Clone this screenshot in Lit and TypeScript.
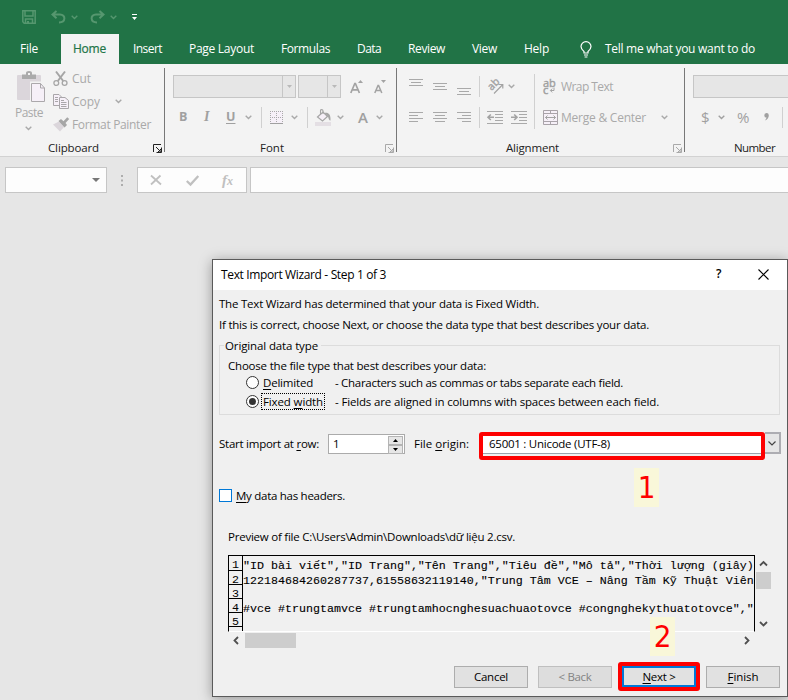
import { LitElement, html, svg, css, nothing } from "lit";
import { customElement, property } from "lit/decorators.js";

/* A single-line label whose tracking is adjusted so that it fills a given width. */
@customElement("ui-label")
class UiLabel extends LitElement {
  @property({ type: Number }) w = 0;
  static styles = css`
    :host { display: inline-block; white-space: nowrap; flex: none; width: max-content; justify-self: start; }
  `;
  firstUpdated() {
    if (!this.w) return;
    const n = (this.textContent ?? "").trim().length;
    const natural = this.getBoundingClientRect().width;
    this.style.letterSpacing = `${(this.w - natural) / n}px`;
  }
  render() { return html`<slot></slot>`; }
}

const icon = (w: number, h: number, body: unknown, cls = "") =>
  html`<svg class="ic ${cls}" width=${w} height=${h} viewBox="0 0 ${w} ${h}">${body}</svg>`;

const chevron = (cls = "") => icon(7, 5, svg`<path d="M.7 .8 3.5 3.5 6.3 .8" fill="none" stroke="currentColor" stroke-width="1.4"/>`, cls);
const triangle = () => icon(5, 3, svg`<path d="M0 0H5L2.5 3Z" fill="#b9b9b9"/>`);
const launcher = () => icon(9, 9, svg`<path d="M.5 8V.5H8M3 3 7 7M8.5 3.5V8.5H3.5M8 5V8H5Z" fill="none" stroke="currentColor"/>`, "launch");
const lines = (rows: number[][]) => icon(14, 19, rows.map(([x, y, w]) => svg`<rect x=${x} y=${y} width=${w} height="1" fill="#a9a9a9"/>`));

const saveIcon = icon(14, 14, svg`<path d="M.8 .8H13.2V13.2H2.2L.8 11.8ZM3 1V6H11V1M3.5 13V9H10.5V13" fill="none" stroke="#56976f" stroke-width="1.5"/><rect x="5" y="11" width="2" height="3" fill="#56976f"/>`);
const undoIcon = icon(15, 14, svg`<path d="M5.5 1 1.5 4.5 5.5 8.2M1.8 4.5H9C15 4.5 15 12.4 8 12.4" fill="none" stroke="#56976f" stroke-width="2"/>`);
const redoIcon = icon(15, 14, svg`<path d="M9.5 1 13.5 4.5 9.5 8.2M13.2 4.5H6C0 4.5 0 12.4 7 12.4" fill="none" stroke="#56976f" stroke-width="2"/>`);
const customize = icon(5, 6, svg`<path d="M0 0H5V1H0ZM0 3H5L2.5 6Z" fill="#fff"/>`);
const bulb = icon(12, 17, svg`<path d="M4 12V10.4C2.4 9.2 1 7.8 1 5.6A5 5 0 0 1 11 5.6C11 7.8 9.6 9.2 8 10.4V12ZM4 14H8M4.6 16H7.4" fill="none" stroke="#fff" stroke-width="1.2"/>`);

const pasteIcon = icon(29, 32, svg`
  <rect x="0" y="4" width="24" height="25" rx="1" fill="#dbd6db"/>
  <path d="M5 3.5H9V2Q9 0 12 0T15 2V3.5H19V8H5Z" fill="#ababab"/><rect x="11" y="2" width="2" height="2" fill="#f3f3f3"/>
  <path d="M13 10.5H24L29 16V32H13Z" fill="#f3f3f3"/>
  <path d="M14.5 12.5H23.5L27.5 17V30.5H14.5Z" fill="#f6f0f8" stroke="#aba8ab"/><path d="M23.5 12.5V17H27.5" fill="none" stroke="#aba8ab"/>`);
const cutIcon = icon(15, 16, svg`<path d="M3 .5 10.2 10M12 .5 4.8 10" stroke="#a6a6a6" stroke-width="2" fill="none"/><circle cx="3.3" cy="12" r="2.4" fill="none" stroke="#a6a6a6" stroke-width="1.3"/><circle cx="11.6" cy="12" r="2.4" fill="none" stroke="#a6a6a6" stroke-width="1.3"/>`);
const copyIcon = icon(16, 15, svg`<path d="M.5 .5H6L8.5 3V11.5H.5ZM2 3.5H5M2 5.5H5M2 7.5H5" fill="#f6f0f8" stroke="#a9a6a9"/><path d="M6.5 3.5H12L15.5 6.5V14.5H6.5Z" fill="#f6f0f8" stroke="#a9a6a9"/><path d="M8 6.5H11M8 8.5H13.5M8 10.5H13.5M8 12.5H13.5" stroke="#a9a6a9"/>`);
const brushIcon = icon(17, 15, svg`<path d="M0 7.5 6 4.5 11 10 7 14.5Z" fill="#dbd6db"/><path d="M5.5 4 8 2 10.5 4.3 14.2 .2 16.2 2 12.5 6 14 8 11.5 10.5Z" fill="#a6a6a6"/>`);
const growIcon = icon(13, 14, svg`<path d="M.8 13 4.8 3.5H5.4L9.4 13M2.3 9.8H8" fill="none" stroke="#a3a3a3" stroke-width="1.7"/><path d="M8 3H13L10.5 0Z" fill="#a3a3a3"/>`);
const shrinkIcon = icon(12, 14, svg`<path d="M.8 13 4 5.5H4.6L7.8 13M2 10.4H6.6" fill="none" stroke="#a3a3a3" stroke-width="1.5"/><path d="M7 0H12L9.5 3Z" fill="#a3a3a3"/>`);
const borderIcon = icon(13, 13, svg`<rect width="13" height="12" fill="#f6f0f8"/><path d="M0 .5H13M0 6.5H13" stroke="#a9a9a9" stroke-dasharray="1 1"/><path d="M.5 0V12M6.5 0V12M12.5 0V12" stroke="#a9a9a9" stroke-dasharray="1 1"/><path d="M0 12.5H13" stroke="#a0a0a0"/>`);
const bucketIcon = icon(16, 17, svg`<rect y="13" width="16" height="4" fill="#e4dfe4"/><path d="M2.5 8 8 3 12.5 7.5 7.5 12Z" fill="#f6f0f8" stroke="#a6a6a6" stroke-width="1.2"/><path d="M5.5 6V1.5Q5.5 .6 6.7 .6T8 1.8V5" fill="none" stroke="#a6a6a6" stroke-width="1.1"/><path d="M9.5 4C13 3.2 16 5 15.5 11.5 14 11.5 13.6 9.5 13 7.5Z" fill="#a6a6a6"/>`);
const orientIcon = icon(17, 16, svg`<text x="0" y="0" transform="translate(4.5 12) rotate(-45)" font-size="10.5" fill="#a3a3a3" stroke="#a3a3a3" stroke-width=".4">ab</text><path d="M7 14.5 15.3 6M11.5 5.5H15.8V9.5" fill="none" stroke="#a3a3a3" stroke-width="1.2"/>`, "orient");
const wrapIcon = icon(14, 17, svg`<text x="0" y="8.5" font-size="11" fill="#9f9f9f" stroke="#9f9f9f" stroke-width=".4">ab</text><text x="0" y="16" font-size="11" fill="#9f9f9f" stroke="#9f9f9f" stroke-width=".5">c</text><path d="M11 9.5V12.5H7.5M9.2 10.6 7.4 12.5 9.2 14.4" fill="none" stroke="#a3a3a3"/>`);
const indent = (right: boolean) => icon(16, 13, svg`<path d="M0 .5H16M8 3.5H16M8 6.5H16M8 9.5H16M0 12.5H16" stroke="#a9a9a9"/>${right
  ? svg`<path d="M0 6.3H5.5M3.2 3.5 6 6.3 3.2 9" fill="none" stroke="#a3a3a3" stroke-width="1.6"/>`
  : svg`<path d="M1 6.3H7M3.8 3.5 1 6.3 3.8 9" fill="none" stroke="#a3a3a3" stroke-width="1.6"/>`}`);
const mergeIcon = icon(15, 15, svg`<path d="M.5 .5H14.5V14.5H.5ZM.5 3.5H14.5M.5 11.5H14.5M7.5 .5V3.5M7.5 11.5V14.5" fill="#f6f0f8" stroke="#a9a3a9"/><path d="M2.5 7.5H12.5M4.5 5.5 2.5 7.5 4.5 9.5M10.5 5.5 12.5 7.5 10.5 9.5" fill="none" stroke="#a3a3a3"/>`);
const commaIcon = icon(5, 8, svg`<path d="M.3 2.4A2.2 2.2 0 0 1 4.8 2.2C4.8 4.8 3.4 6.6 .8 7.6 1.8 6.6 2.4 5.6 2.5 4.6A2.2 2.2 0 0 1 .3 2.4Z" fill="#a0a0a0"/>`);
const arrow = (d: string) => icon(9, 9, svg`<path d=${d} fill="none" stroke="#505050" stroke-width="1.8"/>`);

const TABS: [string, number, string][] = [
  ["File", 18, "t-file"], ["Home", 33, "t-home"], ["Insert", 29, "t-ins"], ["Page Layout", 65, ""],
  ["Formulas", 49, ""], ["Data", 24, ""], ["Review", 37, ""], ["View", 25, ""], ["Help", 25, ""],
];

const PREVIEW = [
  `"ID bài viết","ID Trang","Tên Trang","Tiêu đề","Mô tả","Thời lượng (giây)`,
  `122184684260287737,61558632119140,"Trung Tâm VCE – Nâng Tầm Kỹ Thuật Viên`,
  ``,
  `#vce #trungtamvce #trungtamhocnghesuachuaotovce #congnghekythuatotovce","`,
  ``,
  ``,
];

@customElement("app-root")
class AppRoot extends LitElement {
  static styles = css`
    :host { display: block; position: relative; width: 788px; height: 700px; overflow: hidden; background: #e6e6e6;
      font: 11.5px/16px "Open Sans", "Noto Sans", sans-serif; color: #000; }
    * { box-sizing: border-box; }
    .ic { display: block; flex: none; overflow: visible; }
    u { text-underline-offset: 2px; text-decoration-thickness: 1px; }

    .head { height: 64px; background: #217346; color: #fff; display: flex; flex-direction: column; }
    .quick { height: 34px; display: grid; align-items: center; padding-left: 22px;
      grid-template-columns: 29px 20px 19px 20px 22px auto; color: #56976f; justify-content: start; }
    .tabs { height: 30px; display: flex; align-items: center; gap: 27px; font-size: 12px; padding-left: 20px; }
    .t-file { margin-right: -4px; }
    .t-home { background: #f3f3f3; color: #217346; height: 30px; width: 58px; padding-left: 12px; line-height: 30px; margin-right: -13px; -webkit-text-stroke: .2px #217346; }
    .tell { display: flex; align-items: center; gap: 13px; margin-left: 4px; }

    .ribbon { height: 93px; background: #f3f3f3; border-bottom: 1px solid #d2d2d2; display: flex; padding-top: 4px; color: #a9a9a9; }
    .group { height: 84px; border-right: 1px solid #777; display: flex; flex-direction: column; flex: none; }
    .cap { height: 16px; margin-top: auto; color: #222; display: grid; align-items: center; margin-bottom: -4px; }
    .cap .launch { color: #222; }
    .clip { width: 165px; } .font { width: 232px; } .align { width: 288px; } .num { width: 104px; border: 0; }
    .clip .cap { grid-template-columns: 105px auto; padding-left: 48px; }
    .font .cap { grid-template-columns: 125px auto; padding-left: 95px; }
    .align .cap { grid-template-columns: 167px auto; padding-left: 109px; }
    .num .cap { padding-left: 49px; }
    .dim .launch { color: #a9a9a9; }

    .cliprow { display: flex; height: 68px; }
    .paste { width: 53px; padding: 3px 0 0 17px; display: flex; flex-direction: column; font-size: 12px; }
    .paste ui-label { margin: 2px 0 0 -2px; }
    .paste .down { margin: 5px 0 0 8px; }
    .cmds { display: grid; grid-template-rows: 22px 23px 23px; }
    .cmd { display: grid; grid-template-columns: 19px 43px auto; align-items: center; justify-content: start; font-size: 12px; }
    .row { display: grid; align-items: center; justify-items: start; }
    .combo { height: 23px; background: #e6e6e6; border: 1px solid #c6c6c6; display: flex; justify-content: flex-end; }
    .combo span { width: 13px; border-left: 1px solid #c6c6c6; display: grid; place-items: center; }
    .w123 { width: 123px; } .w43 { width: 43px; } .w110 { width: 110px; }
    .f1 { grid-template-columns: 125px 52px 24px auto; padding: 7px 0 0 8px; height: 30px; }
    .f2 { grid-template-columns: 24px 23px 19px 16px 9px 21px 16px 8px 22px 20px 19px 7px; padding-left: 14px; height: 38px; }
    .v { width: 1px; height: 21px; background: #d0d0d0; }
    .glyph { font-size: 12.5px; font-weight: 700; color: #a0a0a0; }
    .it { font-style: italic; font-family: "Liberation Serif", serif; font-size: 14px; padding-left: 1px; }
    .big { font-size: 15px; font-weight: 600; padding-left: 1px; }
    .arows { display: grid; grid-template-columns: 137px auto; }
    .a1 { grid-template-columns: 24px 24px 22px 8px 21px auto; padding: 7px 0 0 12px; height: 34px; }
    .a2 { grid-template-columns: 24px 24px 22px 8px 24px auto; padding-left: 12px; height: 30px; }
    .a1 .orient { margin-top: -3px; }
    .a1 .v, .a1 .orient + svg { margin-top: -4px; }
    .right { border-left: 1px solid #d0d0d0; margin-top: 6px; height: 55px; padding-left: 8px; font-size: 12px; }
    .wm { display: grid; grid-template-columns: 18px 100px auto; align-items: center; height: 25px; }
    .wm + .wm { height: 37px; }
    .n2 { grid-template-columns: 17px 19px 27px 18px auto; padding-left: 16px; height: 38px; color: #a0a0a0; }
    .sym { font-size: 15px; }

    .fbar { display: grid; grid-template-columns: 102px 30px 110px 3px auto; padding: 10px 0 0 5px; }
    .box { height: 26px; background: #fdfdfd; border: 1px solid #c6c6c6; display: grid; align-items: center; }
    .fbar .box:last-child { border-right: 0; }
    .name { justify-content: end; padding-right: 6px; }
    .dots { display: grid; place-items: center; }
    .fx { grid-template-columns: 36px 36px auto; padding-left: 12px; color: #c0c0c0; }
    .fxt { font: italic 700 15px/16px "Liberation Serif", serif; }
    .fxt small { font-size: 12px; }

    .dialog { position: absolute; left: 212px; top: 259px; width: 576px; height: 438px; background: #f0f0f0; border: 1px solid #5a5a5a;
      box-shadow: 0 2px 12px rgba(0,0,0,.35); display: flex; flex-direction: column; }
    .title { height: 30px; background: #fff; display: grid; grid-template-columns: 494px 43px auto; align-items: center; padding: 0 0 2px 8px; flex: none; font-size: 12px; }
    .title b { font-weight: 600; padding-left: 1px; }
    .title ui-label { margin-top: 1px; }
    .intro { height: 55px; padding: 3px 0 0 6px; display: grid; grid-template-rows: 21px 21px; align-items: center; flex: none; }
    .kind { margin-left: 6px; width: 561px; height: 70px; border: 1px solid #dcdcdc; display: flex; flex-direction: column; flex: none; padding-left: 8px; }
    .legend { background: #f0f0f0; width: 97px; height: 16px; margin: -8px 0 0 -4px; padding-left: 1px; }
    .choose { margin-top: 4px; height: 15px; }
    .opt { display: grid; grid-template-columns: 15px 74px auto; align-items: center; height: 19px; padding-left: 18px; }
    .rad { width: 13px; height: 13px; border: 1px solid #333; border-radius: 50%; background: #fff; display: grid; place-items: center; }
    .rad i { width: 7px; height: 7px; border-radius: 50%; background: #333; }
    .otext { height: 17px; line-height: 16px; justify-self: start; padding: 0 1px; border: 1px solid transparent; display: flex; align-items: center; }
    .otext.focus { border: 1px dotted #000; }
    .imp { display: grid; grid-template-columns: 109px 86px 65px auto; padding-left: 6px; margin-top: 17px; height: 28px; align-items: start; flex: none; }
    .imp > ui-label { margin-top: 4px; }
    .spin { width: 77px; height: 20px; margin-top: 2px; background: #fff; border: 1px solid #ababab; display: flex; justify-content: space-between; align-items: center; padding: 0 1px 0 4px; }
    .spin > div { display: grid; grid-template-rows: 8px 8px; gap: 1px; }
    .spin b { width: 15px; background: #e6e6e6; border: 1px solid #b4b4b4; display: grid; place-items: center; height: 9px; }
    .origin { display: flex; height: 28px; }
    .red { width: 286px; height: 28px; border: 4px solid #fe0000; border-radius: 3px; background: #f0f0f0; }
    .red div { background: #fff; border-bottom: 1px solid #9aa3ad; height: 18px; padding-left: 6px; line-height: 15px; }
    .dd { width: 16px; height: 22px; border: 2px solid #adadb2; border-left: 0; background: #e6e6e6; display: grid; place-items: center; }
    .chk { display: flex; align-items: center; gap: 4px; padding-left: 6px; margin-top: 27px; height: 18px; flex: none; }
    .cb { width: 13px; height: 13px; border: 1px solid #0078d7; background: #fff; margin-top: -1px; }
    .pname { margin: 24px 0 0 15px; height: 16px; flex: none; }
    .pv { margin: 10px 0 0 15px; display: grid; grid-template-columns: 527px 17px; flex: none; }
    .sheet { height: 77px; overflow: hidden; border: 1px solid #000; border-bottom: 1px solid #fff; font: 11.67px/14px "Liberation Mono", monospace; }
    .ln { display: flex; height: 14px; white-space: pre; }
    .ln b { width: 14px; flex: none; border-right: 1px solid #000; border-bottom: 1px solid #000; font-weight: 400; padding-left: 3px; line-height: 18px; }
    .ln:first-child { height: 15px; }
    .ln span { line-height: 20px; -webkit-text-stroke: .1px #000; }
    .vs { display: flex; flex-direction: column; align-items: center; padding-top: 4px; }
    .vs i { width: 15px; height: 17px; background: #cdcdcd; margin: 4px 0 30px; }
    .hs { height: 16px; display: grid; grid-template-columns: 13px 497px auto; align-items: center; margin-left: 19px; flex: none; }
    .hs i { width: 51px; height: 15px; background: #cdcdcd; }
    .btns { display: flex; margin: 14px 0 0 241px; flex: none; align-items: center; height: 29px; }
    .btn { width: 74px; height: 22px; background: #e1e1e1; border: 1px solid #adadad; display: flex; align-items: center; justify-content: center; }
    .off { margin: 0 6px 0 10px; color: #838383; background: #ddd; border-color: #bfbfbf; }
    .ring { border: 4px solid #fe0000; border-radius: 3px; width: 82px; height: 29px; display: flex; }
    .go { flex: 1; height: 21px; border: 2px solid #0078d7; }
    .fin { margin-left: 6px; }
    .note { position: absolute; width: 25px; height: 39px; background: #f9f7d9; color: #fe0000; text-align: center;
      font: 31px/38px "DejaVu Sans Condensed", "DejaVu Sans", sans-serif; font-stretch: condensed; }
    .n-one { left: 634px; top: 468px; } .n-two { left: 650px; top: 617px; }
  `;

  header() {
    return html`<div class="head">
      <div class="quick">${saveIcon}${undoIcon}${chevron()}${redoIcon}${chevron()}${customize}</div>
      <div class="tabs">
        ${TABS.map(([t, w, c]) => c === "t-home"
          ? html`<div class=${c}><ui-label w=${w}>${t}</ui-label></div>`
          : html`<ui-label class=${c} w=${w}>${t}</ui-label>`)}
        <div class="tell">${bulb}<ui-label w="150">Tell me what you want to do</ui-label></div>
      </div>
    </div>`;
  }

  ribbon() {
    return html`<div class="ribbon">
      <div class="group clip">
        <div class="cliprow">
          <div class="paste">${pasteIcon}<ui-label w="28">Paste</ui-label>${chevron("down")}</div>
          <div class="cmds">
            <div class="cmd">${cutIcon}<ui-label w="19">Cut</ui-label></div>
            <div class="cmd">${copyIcon}<ui-label w="28">Copy</ui-label>${chevron()}</div>
            <div class="cmd">${brushIcon}<ui-label w="79">Format Painter</ui-label></div>
          </div>
        </div>
        <div class="cap"><ui-label w="51">Clipboard</ui-label>${launcher()}</div>
      </div>
      <div class="group font">
        <div class="row f1"><div class="combo w123"><span>${triangle()}</span></div><div class="combo w43"><span>${triangle()}</span></div>${growIcon}${shrinkIcon}</div>
        <div class="row f2">
          <span class="glyph">B</span><span class="glyph it">I</span><u class="glyph">U</u>${chevron()}
          <i class="v"></i>${borderIcon}${chevron()}<i class="v"></i>${bucketIcon}${chevron()}<span class="glyph big">A</span>${chevron()}
        </div>
        <div class="cap dim"><ui-label w="24">Font</ui-label>${launcher()}</div>
      </div>
      <div class="group align">
        <div class="arows">
          <div>
            <div class="row a1">
              ${lines([[0, 0, 14], [2, 3, 10], [0, 6, 14]])}${lines([[0, 4, 14], [2, 7, 10], [0, 10, 14]])}${lines([[0, 9, 14], [2, 12, 10], [0, 15, 14]])}
              <i class="v"></i>${orientIcon}${chevron()}
            </div>
            <div class="row a2">
              ${lines([[0, 4, 14], [0, 7, 9], [0, 10, 14], [0, 13, 9]])}${lines([[0, 4, 14], [2, 7, 10], [0, 10, 14], [2, 13, 10]])}${lines([[0, 4, 14], [5, 7, 9], [0, 10, 14], [5, 13, 9]])}
              <i class="v"></i>${indent(false)}${indent(true)}
            </div>
          </div>
          <div class="right">
            <div class="wm">${wrapIcon}<ui-label w="52">Wrap Text</ui-label></div>
            <div class="wm">${mergeIcon}<ui-label w="85">Merge &amp; Center</ui-label>${chevron()}</div>
          </div>
        </div>
        <div class="cap dim"><ui-label w="53">Alignment</ui-label>${launcher()}</div>
      </div>
      <div class="group num">
        <div class="row f1"><div class="combo w110"></div></div>
        <div class="row n2"><span class="sym">$</span>${chevron()}<span class="sym">%</span>${commaIcon}<i class="v"></i></div>
        <div class="cap"><ui-label w="41">Number</ui-label></div>
      </div>
    </div>`;
  }

  formulaBar() {
    return html`<div class="fbar">
      <div class="box name">${icon(8, 4, svg`<path d="M0 0H8L4 4Z" fill="#777"/>`)}</div>
      <div class="dots">${icon(2, 11, svg`<path d="M0 0H2V2H0ZM0 4.5H2V6.5H0ZM0 9H2V11H0Z" fill="#adadad"/>`)}</div>
      <div class="box fx">
        ${icon(12, 10, svg`<path d="M1 .5 11 9.5M10.5 .5 1 9.5" stroke="currentColor" stroke-width="1.8"/>`)}
        ${icon(13, 11, svg`<path d="M.8 6 4.5 9.5 12.3 1" fill="none" stroke="currentColor" stroke-width="2.3"/>`)}
        <span class="fxt">f<small>x</small></span>
      </div>
      <span></span>
      <div class="box"></div>
    </div>`;
  }

  dialog() {
    return html`<div class="dialog">
      <div class="title">
        <ui-label w="165">Text Import Wizard - Step 1 of 3</ui-label>
        <b>?</b>
        ${icon(11, 11, svg`<path d="M.5 .5 10.5 10.5M10.5 .5 .5 10.5" stroke="#000" stroke-width="1.1"/>`)}
      </div>
      <div class="intro">
        <ui-label w="320">The Text Wizard has determined that your data is Fixed Width.</ui-label>
        <ui-label w="430">If this is correct, choose Next, or choose the data type that best describes your data.</ui-label>
      </div>
      <div class="kind">
        <div class="legend"><ui-label w="93">Original data type</ui-label></div>
        <div class="choose"><ui-label w="258">Choose the file type that best describes your data:</ui-label></div>
        <div class="opt"><span class="rad"></span><span class="otext"><ui-label w="50"><u>D</u>elimited</ui-label></span><ui-label w="288">- Characters such as commas or tabs separate each field.</ui-label></div>
        <div class="opt"><span class="rad"><i></i></span><span class="otext focus"><ui-label w="60">Fixed <u>w</u>idth</ui-label></span><ui-label w="324">- Fields are aligned in columns with spaces between each field.</ui-label></div>
      </div>
      <div class="imp">
        <ui-label w="100">Start import at <u>r</u>ow:</ui-label>
        <div class="spin">1<div>
          <b>${icon(5, 3, svg`<path d="M0 3H5L2.5 0Z" fill="#000"/>`)}</b>
          <b>${icon(5, 3, svg`<path d="M0 0H5L2.5 3Z" fill="#000"/>`)}</b>
        </div></div>
        <ui-label w="55">File <u>o</u>rigin:</ui-label>
        <div class="origin">
          <div class="red"><div><ui-label w="121">65001 : Unicode (UTF-8)</ui-label></div></div>
          <div class="dd">${icon(8, 5, svg`<path d="M.5 .5 4 4 7.5 .5" fill="none" stroke="#444" stroke-width="1.2"/>`)}</div>
        </div>
      </div>
      <div class="chk"><span class="cb"></span><ui-label w="109"><u>M</u>y data has headers.</ui-label></div>
      <div class="pname"><ui-label w="287">Preview of file C:\\Users\\Admin\\Downloads\\dữ liệu 2.csv.</ui-label></div>
      <div class="pv">
        <div class="sheet">${PREVIEW.map((t, i) => html`<div class="ln"><b>${i < 5 ? i + 1 : nothing}</b><span>${t}</span></div>`)}</div>
        <div class="vs">${arrow("M1 6.5 4.5 3 8 6.5")}<i></i>${arrow("M1 3 4.5 6.5 8 3")}</div>
      </div>
      <div class="hs">${arrow("M6 1 2.5 4.5 6 8")}<i></i>${arrow("M3 1 6.5 4.5 3 8")}</div>
      <div class="btns">
        <div class="btn"><ui-label w="34">Cancel</ui-label></div>
        <div class="btn off"><ui-label w="33">&lt; Back</ui-label></div>
        <div class="ring"><div class="btn go"><ui-label w="33"><u>N</u>ext &gt;</ui-label></div></div>
        <div class="btn fin"><ui-label w="31"><u>F</u>inish</ui-label></div>
      </div>
    </div>`;
  }

  render() {
    return html`${this.header()}${this.ribbon()}${this.formulaBar()}${this.dialog()}
      <div class="note n-one">1</div><div class="note n-two">2</div>`;
  }
}
